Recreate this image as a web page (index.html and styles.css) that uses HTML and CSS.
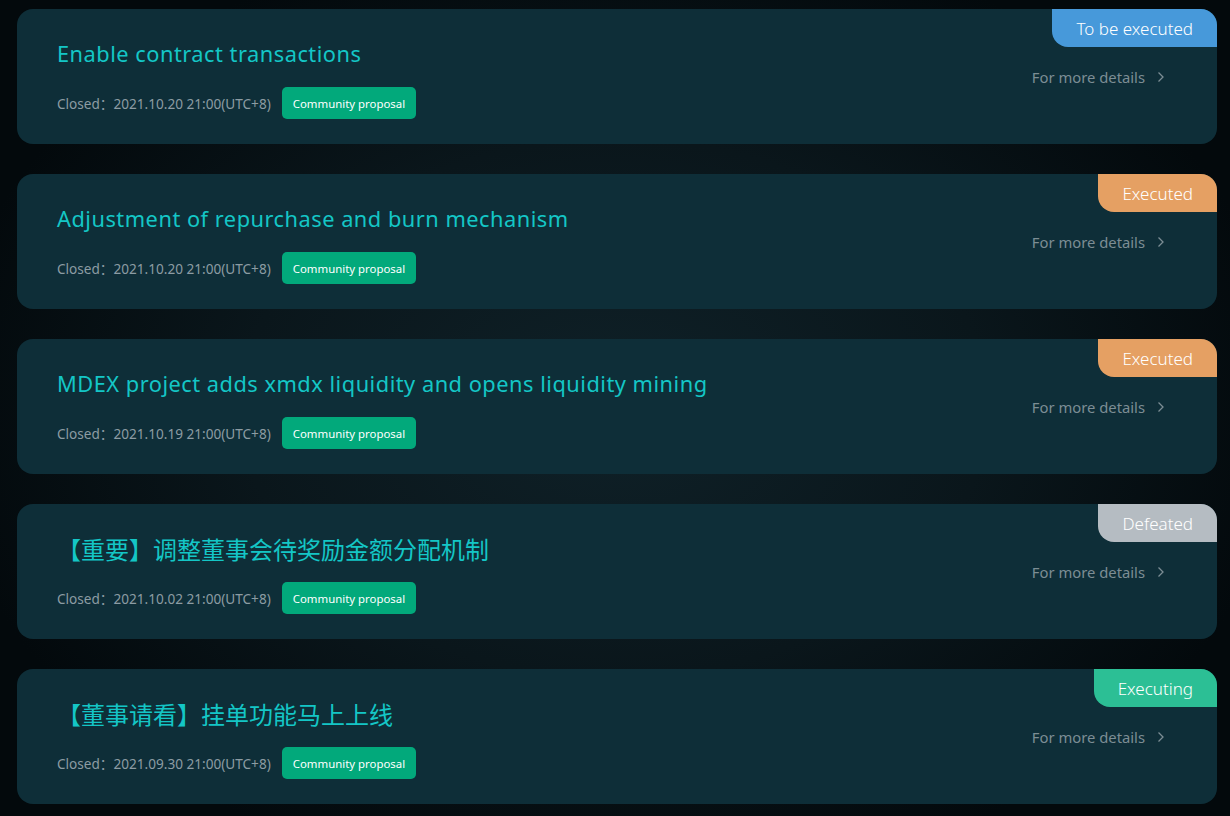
FILE: index.html
```html
<!DOCTYPE html>
<html lang="en">
<head>
    <meta charset="UTF-8">
    <meta name="viewport" content="width=device-width, initial-scale=1.0">
    <title>Proposals</title>
    <link rel="stylesheet" href="styles.css">
</head>
<body>
    <div class="list">
        <div class="card">
            <div class="info">
                <h2 class="title">Enable contract transactions</h2>
                <div class="meta">
                    <span class="closed">Closed：2021.10.20 21:00(UTC+8)</span>
                    <span class="badge">Community proposal</span>
                </div>
            </div>
            <a class="more" href="#">For more details
                <svg class="arrow" width="8" height="12" viewBox="0 0 8 12"><polyline points="1.5,1.5 6,6 1.5,10.5" /></svg>
            </a>
            <span class="status status-pending">To be executed</span>
        </div>

        <div class="card">
            <div class="info">
                <h2 class="title">Adjustment of repurchase and burn mechanism</h2>
                <div class="meta">
                    <span class="closed">Closed：2021.10.20 21:00(UTC+8)</span>
                    <span class="badge">Community proposal</span>
                </div>
            </div>
            <a class="more" href="#">For more details
                <svg class="arrow" width="8" height="12" viewBox="0 0 8 12"><polyline points="1.5,1.5 6,6 1.5,10.5" /></svg>
            </a>
            <span class="status status-done">Executed</span>
        </div>

        <div class="card">
            <div class="info">
                <h2 class="title">MDEX project adds xmdx liquidity and opens liquidity mining</h2>
                <div class="meta">
                    <span class="closed">Closed：2021.10.19 21:00(UTC+8)</span>
                    <span class="badge">Community proposal</span>
                </div>
            </div>
            <a class="more" href="#">For more details
                <svg class="arrow" width="8" height="12" viewBox="0 0 8 12"><polyline points="1.5,1.5 6,6 1.5,10.5" /></svg>
            </a>
            <span class="status status-done">Executed</span>
        </div>

        <div class="card">
            <div class="info">
                <h2 class="title cjk">【重要】调整董事会待奖励金额分配机制</h2>
                <div class="meta">
                    <span class="closed">Closed：2021.10.02 21:00(UTC+8)</span>
                    <span class="badge">Community proposal</span>
                </div>
            </div>
            <a class="more" href="#">For more details
                <svg class="arrow" width="8" height="12" viewBox="0 0 8 12"><polyline points="1.5,1.5 6,6 1.5,10.5" /></svg>
            </a>
            <span class="status status-defeated">Defeated</span>
        </div>

        <div class="card">
            <div class="info">
                <h2 class="title cjk">【董事请看】挂单功能马上上线</h2>
                <div class="meta">
                    <span class="closed">Closed：2021.09.30 21:00(UTC+8)</span>
                    <span class="badge">Community proposal</span>
                </div>
            </div>
            <a class="more" href="#">For more details
                <svg class="arrow" width="8" height="12" viewBox="0 0 8 12"><polyline points="1.5,1.5 6,6 1.5,10.5" /></svg>
            </a>
            <span class="status status-running">Executing</span>
        </div>
    </div>
</body>
</html>
```

FILE: styles.css
```css
* {
    margin: 0;
    padding: 0;
    box-sizing: border-box;
}

body {
    font-family: "Noto Sans", "Noto Sans CJK SC", sans-serif;
    background: radial-gradient(ellipse 55% 60% at 50% 50%, #0f2128 0%, #0a161b 55%, #03090c 100%);
    min-height: 100vh;
    padding: 9px 13px 0 17px;
    overflow: hidden;
}

.list {
    display: flex;
    flex-direction: column;
    gap: 30px;
}

.card {
    position: relative;
    display: flex;
    align-items: center;
    justify-content: space-between;
    height: 135px;
    padding: 0 52px 0 40px;
    background: #0e2e38;
    border-radius: 16px;
    overflow: hidden;
}

.info {
    display: flex;
    flex-direction: column;
    gap: 18px;
    padding-top: 5px;
}

.title {
    color: #14c6c6;
    font-size: 21.8px;
    font-weight: 400;
    letter-spacing: 0.5px;
    line-height: 30px;
}

.title.cjk {
    font-family: "Noto Sans CJK SC", sans-serif;
    font-size: 24px;
    letter-spacing: 0;
}

.meta {
    display: flex;
    align-items: center;
    gap: 11px;
}

.closed {
    color: #8c9ca3;
    font-size: 13.6px;
}

.badge {
    display: inline-flex;
    align-items: center;
    height: 32px;
    padding: 0 11px;
    background: #02a97b;
    color: #ffffff;
    font-size: 11.4px;
    border-radius: 5px;
}

.more {
    color: #7c8d94;
    font-size: 14.8px;
    text-decoration: none;
    display: flex;
    align-items: center;
    gap: 12px;
}

.arrow {
    fill: none;
    stroke: #7c8d94;
    stroke-width: 1.3;
}

.status {
    position: absolute;
    top: 0;
    right: 0;
    height: 38px;
    display: flex;
    align-items: center;
    padding: 0 24px;
    color: #ffffff;
    font-size: 17px;
    font-weight: 300;
    border-bottom-left-radius: 16px;
}

.status-pending {
    background: #4799da;
}

.status-done {
    background: #e5a063;
}

.status-defeated {
    background: #b5bcc2;
}

.status-running {
    background: #2cbf95;
}
```
